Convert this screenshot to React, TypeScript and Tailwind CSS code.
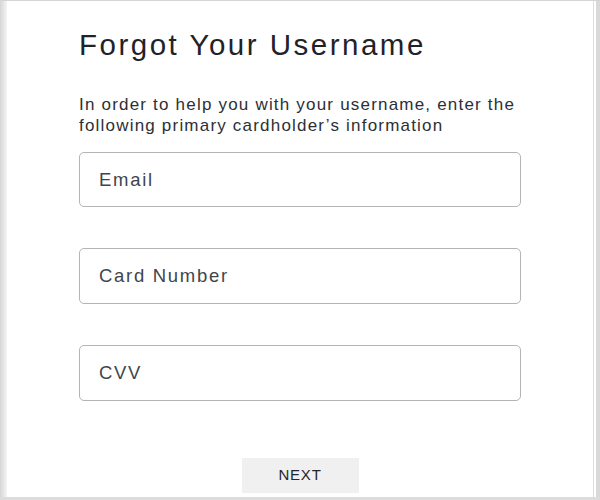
export default function App() {
  return (
    <div className="w-[600px] h-[500px] bg-white overflow-hidden">
      <div
        className="w-[600px] h-[500px] flex border-t border-t-[#d4d4d4] border-b-[3px] border-b-[#dcdcdc]"
        style={{ fontFamily: '"Liberation Sans", Arial, sans-serif' }}
      >
        {/* left frame */}
        <div className="w-[7px] shrink-0 bg-gradient-to-r from-[#d6d6d6] to-[#f4f4f4]" />

        {/* Form */}
        <div className="flex-1 flex flex-col pl-[72px] pr-[72px] pt-[27px]">
          <h1 className="text-[29.5px] leading-[34px] tracking-[2.5px] text-[#1f2328] font-normal">
            Forgot Your Username
          </h1>
          <p className="mt-[32px] text-[17px] leading-[21px] tracking-[1.2px] text-[#2c3036]">
            In order to help you with your username, enter the
            <br />
            following primary cardholder’s information
          </p>

          <div className="mt-[16px] flex flex-col gap-[41px]">
            <input
              type="text"
              placeholder="Email"
              className="h-[55px] w-[442px] rounded-[5px] border border-[#b4b4b4] bg-white px-[19px] text-[18.5px] tracking-[1.7px] text-[#333] placeholder:text-[#40454c] outline-none"
            />
            <input
              type="text"
              placeholder="Card Number"
              className="h-[56px] w-[442px] rounded-[5px] border border-[#b4b4b4] bg-white px-[19px] text-[18.5px] tracking-[1.7px] text-[#333] placeholder:text-[#40454c] outline-none"
            />
            <input
              type="text"
              placeholder="CVV"
              className="h-[56px] w-[442px] rounded-[5px] border border-[#b4b4b4] bg-white px-[19px] text-[18.5px] tracking-[1.7px] text-[#333] placeholder:text-[#40454c] outline-none"
            />
          </div>

          <div className="w-[442px] flex justify-center mt-[57px]">
            <button className="w-[117px] h-[35px] bg-[#f0f0f1] text-[15px] tracking-[0.8px] text-[#23272d]">
              NEXT
            </button>
          </div>
        </div>

        {/* right frame */}
        <div className="w-[7px] shrink-0 flex">
          <div className="w-[1px] bg-[#dedede]" />
          <div className="w-[2px] bg-white" />
          <div className="flex-1 bg-[#d9d9d9]" />
        </div>
      </div>
    </div>
  );
}
